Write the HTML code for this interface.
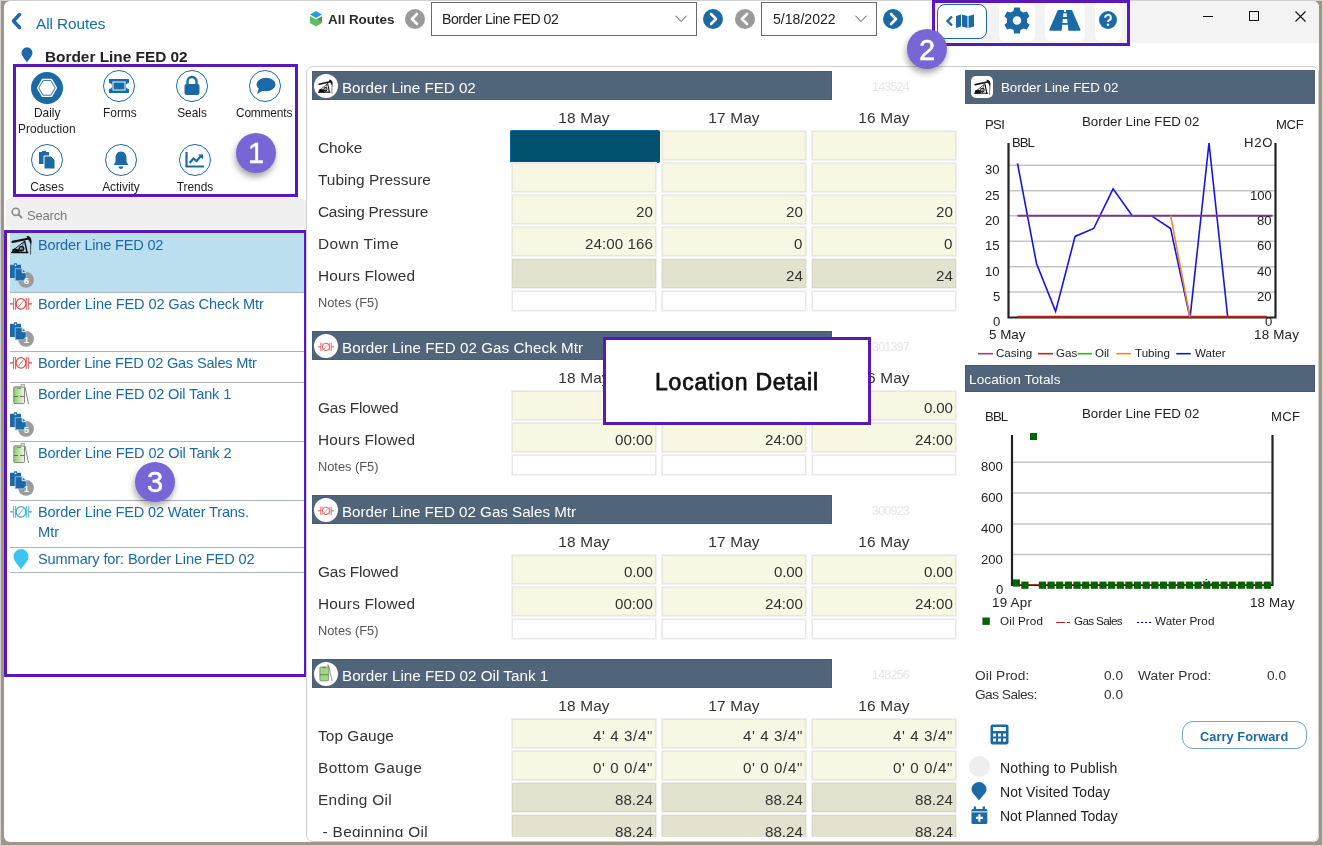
<!DOCTYPE html><html><head><meta charset="utf-8"><style>
html,body{margin:0;padding:0;}
body{width:1323px;height:846px;position:relative;overflow:hidden;background:#ced2d5;font-family:"Liberation Sans",sans-serif;}
.t{position:absolute;white-space:nowrap;line-height:1;will-change:transform;}
.b{position:absolute;box-sizing:border-box;}
svg{position:absolute;overflow:visible;}
</style></head><body>
<div class="b" style="left:1px;top:1px;width:1321px;height:844px;background:#a49482;"></div>
<div class="b" style="left:4px;top:1px;width:1315px;height:841px;background:#fff;border-radius:6px;"></div>
<div class="b" style="left:929px;top:1px;width:390px;height:42px;background:#f3f3f3;border-radius:0 6px 0 6px;"></div>
<div class="b" style="left:1203px;top:16px;width:10px;height:1px;background:#111;"></div>
<div class="b" style="left:1249px;top:11px;width:10px;height:10px;border:1px solid #111;"></div>
<svg style="left:1295px;top:11px" width="11" height="11"><path d="M0.5 0.5L10.5 10.5M10.5 0.5L0.5 10.5" stroke="#111" stroke-width="1.1"/></svg>
<svg style="left:10px;top:12px" width="14" height="18"><path d="M9.5 2.5L3.5 9L9.5 15.5" fill="none" stroke="#1b6aa7" stroke-width="3.5" stroke-linecap="round" stroke-linejoin="round"/></svg>
<div class="t " style="left:36px;top:16px;font-size:15.3px;color:#1b6aa7;font-weight:normal;letter-spacing:-0.041px;">All Routes</div>
<svg style="left:21px;top:47px" width="12" height="16"><path d="M6 15.5C4.5 13 0.5 9 0.5 5.8A5.5 5.5 0 0 1 11.5 5.8C11.5 9 7.5 13 6 15.5Z" fill="#1b6aa7"/></svg>
<div class="t " style="left:45px;top:49px;font-size:15.4px;color:#222;font-weight:bold;letter-spacing:-0.010px;">Border Line FED 02</div>
<div class="b" style="left:13px;top:64px;width:285px;height:133px;border:3px solid #5b17bf;"></div>
<div class="b" style="left:31px;top:72px;width:32px;height:32px;background:#1b6aa7;border-radius:50%;"></div>
<svg style="left:36px;top:78px" width="22" height="20" viewBox="0 0 22 20"><path d="M6 0.8H16L21.2 9.9L16 19H6L0.8 9.9Z" fill="#fff"/><path d="M7 2.6H15L19.1 9.9L15 17.2H7L2.9 9.9Z" fill="none" stroke="#1b6aa7" stroke-width="0.9"/></svg>
<div class="b" style="left:103px;top:70px;width:32px;height:32px;border:1.3px solid #1b6aa7;border-radius:50%;"></div>
<div class="b" style="left:176px;top:70px;width:32px;height:32px;border:1.3px solid #1b6aa7;border-radius:50%;"></div>
<div class="b" style="left:249px;top:70px;width:32px;height:32px;border:1.3px solid #1b6aa7;border-radius:50%;"></div>
<svg style="left:108px;top:78px" width="22" height="16"><path d="M1 1H21V5A3 3 0 0 0 21 11V15H1V11A3 3 0 0 0 1 5Z" fill="#1b6aa7"/><rect x="5" y="4" width="12" height="8" fill="none" stroke="#cfe3f2" stroke-width="1.2"/></svg>
<svg style="left:184px;top:76px" width="16" height="20"><path d="M3.5 8V5.5A4.5 4.5 0 0 1 12.5 5.5V8" fill="none" stroke="#1b6aa7" stroke-width="2.4"/><rect x="0.5" y="8" width="15" height="11" rx="2" fill="#1b6aa7"/></svg>
<svg style="left:255px;top:77px" width="21" height="18"><ellipse cx="11" cy="7.5" rx="9.5" ry="6.8" fill="#1b6aa7"/><path d="M4 11L2 17L9 13Z" fill="#1b6aa7"/></svg>
<div class="t " style="left:33.5px;top:108px;font-size:11.9px;color:#222;font-weight:normal;">Daily</div>
<div class="t " style="left:17.5px;top:124px;font-size:11.9px;color:#222;font-weight:normal;letter-spacing:0.085px;">Production</div>
<div class="t " style="left:103px;top:108px;font-size:11.9px;color:#222;font-weight:normal;">Forms</div>
<div class="t" style="left:-8.00px;width:400px;text-align:center;top:108px;font-size:11.9px;color:#222;font-weight:normal;">Seals</div>
<div class="t " style="left:236.3px;top:108px;font-size:11.9px;color:#222;font-weight:normal;letter-spacing:-0.163px;">Comments</div>
<div class="b" style="left:31px;top:144px;width:32px;height:32px;border:1.3px solid #1b6aa7;border-radius:50%;"></div>
<div class="b" style="left:105px;top:144px;width:32px;height:32px;border:1.3px solid #1b6aa7;border-radius:50%;"></div>
<div class="b" style="left:179px;top:144px;width:32px;height:32px;border:1.3px solid #1b6aa7;border-radius:50%;"></div>
<svg style="left:38px;top:150px" width="18" height="20"><path d="M1 2H4V1H8V2H11V14H1Z" fill="#1b6aa7"/><path d="M6 6H13L17 10V19H6Z" fill="#1b6aa7" stroke="#fff" stroke-width="1"/></svg>
<svg style="left:112px;top:150px" width="18" height="20"><path d="M9 1.5C5 1.5 3.5 5 3.5 8V12L1.5 15H16.5L14.5 12V8C14.5 5 13 1.5 9 1.5Z" fill="#1b6aa7"/><path d="M6.5 16.5A2.5 2.5 0 0 0 11.5 16.5Z" fill="#1b6aa7"/></svg>
<svg style="left:185px;top:151px" width="20" height="18"><path d="M1.5 1V15.5H19" fill="none" stroke="#1b6aa7" stroke-width="2.2"/><path d="M4.5 12L8.5 7.5L11.5 10L16.5 4.5" fill="none" stroke="#1b6aa7" stroke-width="2.2"/><path d="M13 3.5H18V8.5Z" fill="#1b6aa7"/></svg>
<div class="t" style="left:-153.00px;width:400px;text-align:center;top:182px;font-size:11.9px;color:#222;font-weight:normal;">Cases</div>
<div class="t" style="left:-79.00px;width:400px;text-align:center;top:182px;font-size:11.9px;color:#222;font-weight:normal;">Activity</div>
<div class="t" style="left:-5.00px;width:400px;text-align:center;top:182px;font-size:11.9px;color:#222;font-weight:normal;">Trends</div>
<div class="b" style="left:6px;top:198px;width:300px;height:31px;background:#f0f0f0;border-radius:5px;"></div>
<svg style="left:11px;top:207px" width="12" height="12"><circle cx="4.8" cy="4.8" r="3.6" fill="none" stroke="#8a8a8a" stroke-width="1.6"/><path d="M7.5 7.5L11 11" stroke="#8a8a8a" stroke-width="1.8"/></svg>
<div class="t " style="left:26.5px;top:209px;font-size:13px;color:#7a7a7a;font-weight:normal;letter-spacing:-0.192px;">Search</div>
<div class="b" style="left:10px;top:233px;width:294px;height:59px;background:#bcdff0;"></div>
<div class="b" style="left:10px;top:292px;width:294px;height:1px;background:#a9b5c4;"></div>
<div class="b" style="left:10px;top:351px;width:294px;height:1px;background:#a9b5c4;"></div>
<div class="b" style="left:10px;top:382px;width:294px;height:1px;background:#a9b5c4;"></div>
<div class="b" style="left:10px;top:441px;width:294px;height:1px;background:#a9b5c4;"></div>
<div class="b" style="left:10px;top:500px;width:294px;height:1px;background:#a9b5c4;"></div>
<div class="b" style="left:10px;top:547px;width:294px;height:1px;background:#a9b5c4;"></div>
<div class="b" style="left:10px;top:572px;width:294px;height:1px;background:#a9b5c4;"></div>
<svg style="left:10.5px;top:235px" width="21" height="19.5" viewBox="0 0 21 19.5" preserveAspectRatio="none"><g fill="none" stroke="#111" stroke-linecap="round"><path d="M1.5 6.9L16.8 3.7" stroke-width="2.1"/><path d="M19.6 10V19.2" stroke-width="0.7"/><path d="M0.8 17.6H16.8" stroke-width="1.5"/><path d="M3 14.5L12.5 7" stroke-width="0.9"/><circle cx="10.5" cy="13.6" r="2.2" stroke-width="1.5"/><path d="M13.6 6.2L16.1 17.6" stroke-width="1.5"/><path d="M12.5 7L10 17" stroke-width="0.7"/></g><path d="M15.3 0.9Q20.5 0.5 20.6 6.5L20.2 10.8Q19 6.5 15.3 0.9Z" fill="#111"/><path d="M0.8 18L1.6 14Q5 12.6 8.3 14.5L8.8 18Z" fill="#111"/></svg>
<div class="t " style="left:37.8px;top:238px;font-size:14.6px;color:#1b6aa7;font-weight:normal;letter-spacing:-0.210px;">Border Line FED 02</div>
<svg style="left:10px;top:263px" width="26" height="26" viewBox="0 0 26 26"><circle cx="16" cy="16.8" r="7.9" fill="#9b9b9b"/><path d="M0 1.8H4V0.2H7V1.8H11V15H0Z" fill="#1b6aa7"/><circle cx="5.5" cy="2.3" r="0.9" fill="#fff"/><path d="M5.2 5.7H12.2L16.2 9.7V17.8H5.2Z" fill="#1b6aa7" stroke="#a8cce6" stroke-width="0.8"/><path d="M12.2 5.9V9.7H16" fill="none" stroke="#fff" stroke-width="0.9"/><text x="16.3" y="20.6" font-family="Liberation Sans" font-weight="bold" font-size="9.5" fill="#fff" text-anchor="middle">6</text></svg>
<svg style="left:10px;top:297px" width="22" height="13.5" viewBox="0 0 22 13.5" preserveAspectRatio="none"><g fill="none" stroke="#e04848"><path d="M0 6.9H3.5M18.5 6.9H22" stroke-width="1.3"/><path d="M3.6 1V12.8M5.6 1V12.8M16.3 1V12.8M18.4 1V12.8" stroke-width="0.9"/><ellipse cx="11" cy="6.9" rx="4.9" ry="5.3" stroke-width="1.2"/><path d="M8 10.5L14 3.2" stroke-width="0.8"/></g></svg>
<div class="t " style="left:37.8px;top:297px;font-size:14.6px;color:#1b6aa7;font-weight:normal;letter-spacing:-0.145px;">Border Line FED 02 Gas Check Mtr</div>
<svg style="left:10px;top:322px" width="26" height="26" viewBox="0 0 26 26"><circle cx="16" cy="16.8" r="7.9" fill="#9b9b9b"/><path d="M0 1.8H4V0.2H7V1.8H11V15H0Z" fill="#1b6aa7"/><circle cx="5.5" cy="2.3" r="0.9" fill="#fff"/><path d="M5.2 5.7H12.2L16.2 9.7V17.8H5.2Z" fill="#1b6aa7" stroke="#a8cce6" stroke-width="0.8"/><path d="M12.2 5.9V9.7H16" fill="none" stroke="#fff" stroke-width="0.9"/><text x="16.3" y="20.6" font-family="Liberation Sans" font-weight="bold" font-size="9.5" fill="#fff" text-anchor="middle">1</text></svg>
<svg style="left:10px;top:356px" width="22" height="13.5" viewBox="0 0 22 13.5" preserveAspectRatio="none"><g fill="none" stroke="#e04848"><path d="M0 6.9H3.5M18.5 6.9H22" stroke-width="1.3"/><path d="M3.6 1V12.8M5.6 1V12.8M16.3 1V12.8M18.4 1V12.8" stroke-width="0.9"/><ellipse cx="11" cy="6.9" rx="4.9" ry="5.3" stroke-width="1.2"/><path d="M8 10.5L14 3.2" stroke-width="0.8"/></g></svg>
<div class="t " style="left:37.8px;top:356px;font-size:14.6px;color:#1b6aa7;font-weight:normal;letter-spacing:-0.214px;">Border Line FED 02 Gas Sales Mtr</div>
<svg style="left:12px;top:384px" width="16" height="20" viewBox="0 0 16 20" preserveAspectRatio="none"><defs><linearGradient id="tg" x1="0" x2="1"><stop offset="0" stop-color="#8ccd6a"/><stop offset="1" stop-color="#eef7e8"/></linearGradient></defs><rect x="1.8" y="2.8" width="10.7" height="16.8" rx="1.2" fill="url(#tg)" stroke="#7a7a7a" stroke-width="0.9"/><path d="M1.8 12.5H6M8 12.5H12.5" stroke="#555" stroke-width="0.8"/><rect x="9" y="0.4" width="3.5" height="2.6" fill="#ddd" stroke="#888" stroke-width="0.6"/><path d="M13 3L16.5 20" stroke="#777" stroke-width="0.9"/><path d="M5 4.3H9" stroke="#666" stroke-width="0.8"/></svg>
<div class="t " style="left:37.8px;top:387px;font-size:14.6px;color:#1b6aa7;font-weight:normal;letter-spacing:-0.157px;">Border Line FED 02 Oil Tank 1</div>
<svg style="left:10px;top:412px" width="26" height="26" viewBox="0 0 26 26"><circle cx="16" cy="16.8" r="7.9" fill="#9b9b9b"/><path d="M0 1.8H4V0.2H7V1.8H11V15H0Z" fill="#1b6aa7"/><circle cx="5.5" cy="2.3" r="0.9" fill="#fff"/><path d="M5.2 5.7H12.2L16.2 9.7V17.8H5.2Z" fill="#1b6aa7" stroke="#a8cce6" stroke-width="0.8"/><path d="M12.2 5.9V9.7H16" fill="none" stroke="#fff" stroke-width="0.9"/><text x="16.3" y="20.6" font-family="Liberation Sans" font-weight="bold" font-size="9.5" fill="#fff" text-anchor="middle">5</text></svg>
<svg style="left:12px;top:443px" width="16" height="20" viewBox="0 0 16 20" preserveAspectRatio="none"><defs><linearGradient id="tg" x1="0" x2="1"><stop offset="0" stop-color="#8ccd6a"/><stop offset="1" stop-color="#eef7e8"/></linearGradient></defs><rect x="1.8" y="2.8" width="10.7" height="16.8" rx="1.2" fill="url(#tg)" stroke="#7a7a7a" stroke-width="0.9"/><path d="M1.8 12.5H6M8 12.5H12.5" stroke="#555" stroke-width="0.8"/><rect x="9" y="0.4" width="3.5" height="2.6" fill="#ddd" stroke="#888" stroke-width="0.6"/><path d="M13 3L16.5 20" stroke="#777" stroke-width="0.9"/><path d="M5 4.3H9" stroke="#666" stroke-width="0.8"/></svg>
<div class="t " style="left:37.8px;top:446px;font-size:14.6px;color:#1b6aa7;font-weight:normal;letter-spacing:-0.147px;">Border Line FED 02 Oil Tank 2</div>
<svg style="left:10px;top:471px" width="26" height="26" viewBox="0 0 26 26"><circle cx="16" cy="16.8" r="7.9" fill="#9b9b9b"/><path d="M0 1.8H4V0.2H7V1.8H11V15H0Z" fill="#1b6aa7"/><circle cx="5.5" cy="2.3" r="0.9" fill="#fff"/><path d="M5.2 5.7H12.2L16.2 9.7V17.8H5.2Z" fill="#1b6aa7" stroke="#a8cce6" stroke-width="0.8"/><path d="M12.2 5.9V9.7H16" fill="none" stroke="#fff" stroke-width="0.9"/><text x="16.3" y="20.6" font-family="Liberation Sans" font-weight="bold" font-size="9.5" fill="#fff" text-anchor="middle">1</text></svg>
<svg style="left:10px;top:505px" width="22" height="13.5" viewBox="0 0 22 13.5" preserveAspectRatio="none"><g fill="none" stroke="#3aa6d8"><path d="M0 6.9H3.5M18.5 6.9H22" stroke-width="1.3"/><path d="M3.6 1V12.8M5.6 1V12.8M16.3 1V12.8M18.4 1V12.8" stroke-width="0.9"/><ellipse cx="11" cy="6.9" rx="4.9" ry="5.3" stroke-width="1.2"/><path d="M8 10.5L14 3.2" stroke-width="0.8"/></g></svg>
<div class="t " style="left:37.8px;top:505px;font-size:14.6px;color:#1b6aa7;font-weight:normal;letter-spacing:-0.168px;">Border Line FED 02 Water Trans.</div>
<div class="t " style="left:37.8px;top:525px;font-size:14.6px;color:#1b6aa7;font-weight:normal;">Mtr</div>
<svg style="left:13px;top:549px" width="16" height="21"><path d="M8 20.5C6 17 0.5 12 0.5 7.5A7.5 7.5 0 0 1 15.5 7.5C15.5 12 10 17 8 20.5Z" fill="#3cc4f0"/></svg>
<div class="t " style="left:37.8px;top:552px;font-size:14.6px;color:#1b6aa7;font-weight:normal;letter-spacing:-0.133px;">Summary for: Border Line FED 02</div>
<div class="b" style="left:4px;top:230px;width:303px;height:447px;border:3px solid #5b17bf;"></div>
<svg style="left:309px;top:11px" width="14" height="16" viewBox="0 0 14 16"><path d="M7 0L13 3.5L7 7L1 3.5Z" fill="#1ea0e0"/><path d="M1 5L7 8.5V15.5L1 12Z" fill="#5cc060"/><path d="M7 8.5L13 5V12L7 15.5Z" fill="#5cc060"/><path d="M13 5.5V11L8.5 8.2Z" fill="#777"/></svg>
<div class="t " style="left:327.5px;top:13px;font-size:13.4px;color:#2b2b2b;font-weight:bold;letter-spacing:0.015px;">All Routes</div>
<div class="b" style="left:405px;top:8.5px;width:20px;height:20px;background:#9a9a9a;border-radius:50%;"></div>
<svg style="left:405px;top:8.5px" width="20" height="20"><path d="M12 5L7 10L12 15" fill="none" stroke="#fff" stroke-width="2.6" stroke-linecap="round" stroke-linejoin="round"/></svg>
<div class="b" style="left:431px;top:2px;width:266px;height:34px;border:1px solid #6a6a6a;background:#fff;"></div>
<div class="t " style="left:442.3px;top:12px;font-size:14.1px;color:#222;font-weight:normal;letter-spacing:-0.454px;">Border Line FED 02</div>
<svg style="left:675px;top:15px" width="12" height="8"><path d="M0.5 0.8L6 6.5L11.5 0.8" fill="none" stroke="#555" stroke-width="1"/></svg>
<div class="b" style="left:703px;top:8.5px;width:20px;height:20px;background:#1b6aa7;border-radius:50%;"></div>
<svg style="left:703px;top:8.5px" width="20" height="20"><path d="M8 5L13 10L8 15" fill="none" stroke="#fff" stroke-width="2.6" stroke-linecap="round" stroke-linejoin="round"/></svg>
<div class="b" style="left:735px;top:8.5px;width:20px;height:20px;background:#9a9a9a;border-radius:50%;"></div>
<svg style="left:735px;top:8.5px" width="20" height="20"><path d="M12 5L7 10L12 15" fill="none" stroke="#fff" stroke-width="2.6" stroke-linecap="round" stroke-linejoin="round"/></svg>
<div class="b" style="left:761px;top:2px;width:116px;height:34px;border:1px solid #6a6a6a;background:#fff;"></div>
<div class="t " style="left:772.6px;top:12px;font-size:14.1px;color:#222;font-weight:normal;letter-spacing:-0.008px;">5/18/2022</div>
<svg style="left:855px;top:15px" width="12" height="8"><path d="M0.5 0.8L6 6.5L11.5 0.8" fill="none" stroke="#555" stroke-width="1"/></svg>
<div class="b" style="left:883px;top:8.5px;width:20px;height:20px;background:#1b6aa7;border-radius:50%;"></div>
<svg style="left:883px;top:8.5px" width="20" height="20"><path d="M8 5L13 10L8 15" fill="none" stroke="#fff" stroke-width="2.6" stroke-linecap="round" stroke-linejoin="round"/></svg>
<div class="b" style="left:999px;top:3px;width:36px;height:38px;background:#fff;border-radius:5px;"></div>
<div class="b" style="left:1045px;top:3px;width:40px;height:38px;background:#fff;border-radius:5px;"></div>
<div class="b" style="left:1095px;top:3px;width:26px;height:38px;background:#fff;border-radius:5px;"></div>
<div class="b" style="left:937px;top:4px;width:50px;height:35px;border:1px solid #1b6aa7;border-radius:8px;background:#fff;"></div>
<svg style="left:945px;top:14px" width="36" height="15" viewBox="0 0 36 15"><path d="M7 2.5L2.5 7L7 11.5" fill="none" stroke="#1b6aa7" stroke-width="2.3"/><path d="M11 2L16 0.5V12.5L11 14Z M17 0.5L22.5 2V14L17 12.5Z M23.5 2L29 0.5V12.5L23.5 14Z" fill="#1b6aa7"/></svg>
<svg style="left:1004px;top:7px" width="26" height="27" viewBox="0 0 26 27"><g transform="translate(13,13.5)"><path d="M-2.8 -13H2.8L3.5 -9.6L6.5 -7.9L9.8 -9.1L12.6 -4.3L10 -2V2L12.6 4.3L9.8 9.1L6.5 7.9L3.5 9.6L2.8 13H-2.8L-3.5 9.6L-6.5 7.9L-9.8 9.1L-12.6 4.3L-10 2V-2L-12.6 -4.3L-9.8 -9.1L-6.5 -7.9L-3.5 -9.6Z" fill="#1b6aa7"/><circle r="4.2" fill="#fff"/></g></svg>
<svg style="left:1040px;top:4px" width="50" height="34" viewBox="1040 4 50 34"><path d="M1057.8 10H1072L1080.3 29.2Q1080.8 30.7 1079.3 30.7H1050.5Q1049 30.7 1049.5 29.2Z" fill="#1b6aa7"/><g fill="#fff"><path d="M1064 9.5H1066V12H1064Z"/><path d="M1063.4 13.2H1066.6L1066.9 17H1063.1Z"/><path d="M1062.8 18.9H1067.2L1067.5 23H1062.5Z"/><path d="M1062.2 24.8H1067.8L1068.4 31H1061.6Z"/></g></svg>
<svg style="left:1099px;top:11px" width="18" height="18" viewBox="0 0 18 18"><circle cx="9" cy="9" r="9" fill="#1b6aa7"/><path d="M6.2 6.8A2.8 2.8 0 1 1 10 9.3C9.2 9.7 9 10 9 11" fill="none" stroke="#fff" stroke-width="2"/><circle cx="9" cy="13.8" r="1.2" fill="#fff"/></svg>
<div class="b" style="left:932px;top:0px;width:198px;height:46px;border:3px solid #5b17bf;"></div>
<div class="b" style="left:306px;top:66px;width:1013px;height:776px;border:1px solid #cfcfcf;border-radius:7px;"></div>
<div class="b" style="left:312px;top:71px;width:520px;height:29px;background:#50647a;border:1px solid #4b5e73;"></div>
<div class="b" style="left:314px;top:74px;width:24px;height:24px;background:#fff;border-radius:50%;"></div>
<svg style="left:318.4px;top:78.6px" width="14.9" height="14.6" viewBox="0 0 21 19.5" preserveAspectRatio="none"><g fill="none" stroke="#111" stroke-linecap="round"><path d="M1.5 6.9L16.8 3.7" stroke-width="2.1"/><path d="M19.6 10V19.2" stroke-width="0.7"/><path d="M0.8 17.6H16.8" stroke-width="1.5"/><path d="M3 14.5L12.5 7" stroke-width="0.9"/><circle cx="10.5" cy="13.6" r="2.2" stroke-width="1.5"/><path d="M13.6 6.2L16.1 17.6" stroke-width="1.5"/><path d="M12.5 7L10 17" stroke-width="0.7"/></g><path d="M15.3 0.9Q20.5 0.5 20.6 6.5L20.2 10.8Q19 6.5 15.3 0.9Z" fill="#111"/><path d="M0.8 18L1.6 14Q5 12.6 8.3 14.5L8.8 18Z" fill="#111"/></svg>
<div class="t " style="left:341.8px;top:80px;font-size:15.2px;color:#fff;font-weight:normal;letter-spacing:-0.028px;">Border Line FED 02</div>
<div class="t " style="left:872.3px;top:81px;font-size:12.5px;color:#e6e6e6;font-weight:normal;letter-spacing:-0.792px;">143524</div>
<div class="t" style="left:384.08px;width:400px;text-align:center;top:110px;font-size:15.4px;color:#333;font-weight:normal;letter-spacing:0.165px;">18 May</div>
<div class="t" style="left:534.08px;width:400px;text-align:center;top:110px;font-size:15.4px;color:#333;font-weight:normal;letter-spacing:0.165px;">17 May</div>
<div class="t" style="left:684.08px;width:400px;text-align:center;top:110px;font-size:15.4px;color:#333;font-weight:normal;letter-spacing:0.165px;">16 May</div>
<div class="t " style="left:317.5px;top:140px;font-size:15.4px;color:#333;font-weight:normal;letter-spacing:-0.057px;">Choke</div>
<div class="b" style="left:510px;top:130px;width:150px;height:33px;background:#00506e;border-radius:2px;border-top:1px solid #0a64a0;border-left:1px solid #0a64a0;"></div>
<div class="b" style="left:662px;top:131px;width:144px;height:29px;background:#f8f7e4;border:1px solid #e6e6da;box-shadow:0 0 0 1px #f1f1f1;"></div>
<div class="b" style="left:812px;top:131px;width:144px;height:29px;background:#f8f7e4;border:1px solid #e6e6da;box-shadow:0 0 0 1px #f1f1f1;"></div>
<div class="t " style="left:317.5px;top:172px;font-size:15.4px;color:#333;font-weight:normal;letter-spacing:0.037px;">Tubing Pressure</div>
<div class="b" style="left:512px;top:163px;width:144px;height:29px;background:#f8f7e4;border:1px solid #e6e6da;box-shadow:0 0 0 1px #f1f1f1;"></div>
<div class="b" style="left:662px;top:163px;width:144px;height:29px;background:#f8f7e4;border:1px solid #e6e6da;box-shadow:0 0 0 1px #f1f1f1;"></div>
<div class="b" style="left:812px;top:163px;width:144px;height:29px;background:#f8f7e4;border:1px solid #e6e6da;box-shadow:0 0 0 1px #f1f1f1;"></div>
<div class="t " style="left:317.5px;top:204px;font-size:15.4px;color:#333;font-weight:normal;letter-spacing:-0.244px;">Casing Pressure</div>
<div class="b" style="left:512px;top:195px;width:144px;height:29px;background:#f8f7e4;border:1px solid #e6e6da;box-shadow:0 0 0 1px #f1f1f1;"></div>
<div class="t" style="right:670.50px;top:204px;font-size:15.15px;color:#333;font-weight:normal;">20</div>
<div class="b" style="left:662px;top:195px;width:144px;height:29px;background:#f8f7e4;border:1px solid #e6e6da;box-shadow:0 0 0 1px #f1f1f1;"></div>
<div class="t" style="right:520.50px;top:204px;font-size:15.15px;color:#333;font-weight:normal;">20</div>
<div class="b" style="left:812px;top:195px;width:144px;height:29px;background:#f8f7e4;border:1px solid #e6e6da;box-shadow:0 0 0 1px #f1f1f1;"></div>
<div class="t" style="right:370.50px;top:204px;font-size:15.15px;color:#333;font-weight:normal;">20</div>
<div class="t " style="left:317.5px;top:236px;font-size:15.4px;color:#333;font-weight:normal;letter-spacing:0.451px;">Down Time</div>
<div class="b" style="left:512px;top:227px;width:144px;height:29px;background:#f8f7e4;border:1px solid #e6e6da;box-shadow:0 0 0 1px #f1f1f1;"></div>
<div class="t" style="right:670.44px;top:236px;font-size:15.15px;color:#333;font-weight:normal;letter-spacing:0.058px;">24:00 166</div>
<div class="b" style="left:662px;top:227px;width:144px;height:29px;background:#f8f7e4;border:1px solid #e6e6da;box-shadow:0 0 0 1px #f1f1f1;"></div>
<div class="t" style="right:520.50px;top:236px;font-size:15.15px;color:#333;font-weight:normal;">0</div>
<div class="b" style="left:812px;top:227px;width:144px;height:29px;background:#f8f7e4;border:1px solid #e6e6da;box-shadow:0 0 0 1px #f1f1f1;"></div>
<div class="t" style="right:370.50px;top:236px;font-size:15.15px;color:#333;font-weight:normal;">0</div>
<div class="t " style="left:317.5px;top:268px;font-size:15.4px;color:#333;font-weight:normal;letter-spacing:0.192px;">Hours Flowed</div>
<div class="b" style="left:512px;top:259px;width:144px;height:29px;background:#e3e2cf;border:1px solid #d9d8c6;box-shadow:0 0 0 1px #f1f1f1;"></div>
<div class="b" style="left:662px;top:259px;width:144px;height:29px;background:#e3e2cf;border:1px solid #d9d8c6;box-shadow:0 0 0 1px #f1f1f1;"></div>
<div class="t" style="right:520.50px;top:268px;font-size:15.15px;color:#333;font-weight:normal;">24</div>
<div class="b" style="left:812px;top:259px;width:144px;height:29px;background:#e3e2cf;border:1px solid #d9d8c6;box-shadow:0 0 0 1px #f1f1f1;"></div>
<div class="t" style="right:370.50px;top:268px;font-size:15.15px;color:#333;font-weight:normal;">24</div>
<div class="t " style="left:317.8px;top:297px;font-size:12.8px;color:#555;font-weight:normal;">Notes (F5)</div>
<div class="b" style="left:512px;top:291px;width:144px;height:20px;background:#fff;border:1px solid #e8e8e8;box-shadow:0 0 0 1px #f4f4f4;"></div>
<div class="b" style="left:662px;top:291px;width:144px;height:20px;background:#fff;border:1px solid #e8e8e8;box-shadow:0 0 0 1px #f4f4f4;"></div>
<div class="b" style="left:812px;top:291px;width:144px;height:20px;background:#fff;border:1px solid #e8e8e8;box-shadow:0 0 0 1px #f4f4f4;"></div>
<div class="b" style="left:312px;top:331px;width:520px;height:29px;background:#50647a;border:1px solid #4b5e73;"></div>
<div class="b" style="left:314px;top:334px;width:24px;height:24px;background:#fff;border-radius:50%;"></div>
<svg style="left:318px;top:341.5px" width="16" height="9.5" viewBox="0 0 22 13.5" preserveAspectRatio="none"><g fill="none" stroke="#e04848"><path d="M0 6.9H3.5M18.5 6.9H22" stroke-width="1.3"/><path d="M3.6 1V12.8M5.6 1V12.8M16.3 1V12.8M18.4 1V12.8" stroke-width="0.9"/><ellipse cx="11" cy="6.9" rx="4.9" ry="5.3" stroke-width="1.2"/><path d="M8 10.5L14 3.2" stroke-width="0.8"/></g></svg>
<div class="t " style="left:341.8px;top:340px;font-size:15.2px;color:#fff;font-weight:normal;letter-spacing:0.043px;">Border Line FED 02 Gas Check Mtr</div>
<div class="t " style="left:872.3px;top:341px;font-size:12.5px;color:#e6e6e6;font-weight:normal;letter-spacing:-0.792px;">301397</div>
<div class="t" style="left:384.08px;width:400px;text-align:center;top:370px;font-size:15.4px;color:#333;font-weight:normal;letter-spacing:0.165px;">18 May</div>
<div class="t" style="left:534.08px;width:400px;text-align:center;top:370px;font-size:15.4px;color:#333;font-weight:normal;letter-spacing:0.165px;">17 May</div>
<div class="t" style="left:684.08px;width:400px;text-align:center;top:370px;font-size:15.4px;color:#333;font-weight:normal;letter-spacing:0.165px;">16 May</div>
<div class="t " style="left:317.5px;top:400px;font-size:15.4px;color:#333;font-weight:normal;letter-spacing:-0.173px;">Gas Flowed</div>
<div class="b" style="left:512px;top:391px;width:144px;height:29px;background:#f8f7e4;border:1px solid #e6e6da;box-shadow:0 0 0 1px #f1f1f1;"></div>
<div class="t" style="right:670.72px;top:400px;font-size:15.15px;color:#333;font-weight:normal;letter-spacing:-0.216px;">0.00</div>
<div class="b" style="left:662px;top:391px;width:144px;height:29px;background:#f8f7e4;border:1px solid #e6e6da;box-shadow:0 0 0 1px #f1f1f1;"></div>
<div class="t" style="right:520.72px;top:400px;font-size:15.15px;color:#333;font-weight:normal;letter-spacing:-0.216px;">0.00</div>
<div class="b" style="left:812px;top:391px;width:144px;height:29px;background:#f8f7e4;border:1px solid #e6e6da;box-shadow:0 0 0 1px #f1f1f1;"></div>
<div class="t" style="right:370.72px;top:400px;font-size:15.15px;color:#333;font-weight:normal;letter-spacing:-0.216px;">0.00</div>
<div class="t " style="left:317.5px;top:432px;font-size:15.4px;color:#333;font-weight:normal;letter-spacing:0.192px;">Hours Flowed</div>
<div class="b" style="left:512px;top:423px;width:144px;height:29px;background:#f8f7e4;border:1px solid #e6e6da;box-shadow:0 0 0 1px #f1f1f1;"></div>
<div class="t" style="right:670.52px;top:432px;font-size:15.15px;color:#333;font-weight:normal;letter-spacing:-0.017px;">00:00</div>
<div class="b" style="left:662px;top:423px;width:144px;height:29px;background:#f8f7e4;border:1px solid #e6e6da;box-shadow:0 0 0 1px #f1f1f1;"></div>
<div class="t" style="right:520.52px;top:432px;font-size:15.15px;color:#333;font-weight:normal;letter-spacing:-0.017px;">24:00</div>
<div class="b" style="left:812px;top:423px;width:144px;height:29px;background:#f8f7e4;border:1px solid #e6e6da;box-shadow:0 0 0 1px #f1f1f1;"></div>
<div class="t" style="right:370.52px;top:432px;font-size:15.15px;color:#333;font-weight:normal;letter-spacing:-0.017px;">24:00</div>
<div class="t " style="left:317.8px;top:461px;font-size:12.8px;color:#555;font-weight:normal;">Notes (F5)</div>
<div class="b" style="left:512px;top:455px;width:144px;height:20px;background:#fff;border:1px solid #e8e8e8;box-shadow:0 0 0 1px #f4f4f4;"></div>
<div class="b" style="left:662px;top:455px;width:144px;height:20px;background:#fff;border:1px solid #e8e8e8;box-shadow:0 0 0 1px #f4f4f4;"></div>
<div class="b" style="left:812px;top:455px;width:144px;height:20px;background:#fff;border:1px solid #e8e8e8;box-shadow:0 0 0 1px #f4f4f4;"></div>
<div class="b" style="left:312px;top:495px;width:520px;height:29px;background:#50647a;border:1px solid #4b5e73;"></div>
<div class="b" style="left:314px;top:498px;width:24px;height:24px;background:#fff;border-radius:50%;"></div>
<svg style="left:318px;top:505.5px" width="16" height="9.5" viewBox="0 0 22 13.5" preserveAspectRatio="none"><g fill="none" stroke="#e04848"><path d="M0 6.9H3.5M18.5 6.9H22" stroke-width="1.3"/><path d="M3.6 1V12.8M5.6 1V12.8M16.3 1V12.8M18.4 1V12.8" stroke-width="0.9"/><ellipse cx="11" cy="6.9" rx="4.9" ry="5.3" stroke-width="1.2"/><path d="M8 10.5L14 3.2" stroke-width="0.8"/></g></svg>
<div class="t " style="left:341.8px;top:504px;font-size:15.2px;color:#fff;font-weight:normal;letter-spacing:-0.019px;">Border Line FED 02 Gas Sales Mtr</div>
<div class="t " style="left:872.3px;top:505px;font-size:12.5px;color:#e6e6e6;font-weight:normal;letter-spacing:-0.792px;">300923</div>
<div class="t" style="left:384.08px;width:400px;text-align:center;top:534px;font-size:15.4px;color:#333;font-weight:normal;letter-spacing:0.165px;">18 May</div>
<div class="t" style="left:534.08px;width:400px;text-align:center;top:534px;font-size:15.4px;color:#333;font-weight:normal;letter-spacing:0.165px;">17 May</div>
<div class="t" style="left:684.08px;width:400px;text-align:center;top:534px;font-size:15.4px;color:#333;font-weight:normal;letter-spacing:0.165px;">16 May</div>
<div class="t " style="left:317.5px;top:564px;font-size:15.4px;color:#333;font-weight:normal;letter-spacing:-0.173px;">Gas Flowed</div>
<div class="b" style="left:512px;top:555px;width:144px;height:29px;background:#f8f7e4;border:1px solid #e6e6da;box-shadow:0 0 0 1px #f1f1f1;"></div>
<div class="t" style="right:670.72px;top:564px;font-size:15.15px;color:#333;font-weight:normal;letter-spacing:-0.216px;">0.00</div>
<div class="b" style="left:662px;top:555px;width:144px;height:29px;background:#f8f7e4;border:1px solid #e6e6da;box-shadow:0 0 0 1px #f1f1f1;"></div>
<div class="t" style="right:520.72px;top:564px;font-size:15.15px;color:#333;font-weight:normal;letter-spacing:-0.216px;">0.00</div>
<div class="b" style="left:812px;top:555px;width:144px;height:29px;background:#f8f7e4;border:1px solid #e6e6da;box-shadow:0 0 0 1px #f1f1f1;"></div>
<div class="t" style="right:370.72px;top:564px;font-size:15.15px;color:#333;font-weight:normal;letter-spacing:-0.216px;">0.00</div>
<div class="t " style="left:317.5px;top:596px;font-size:15.4px;color:#333;font-weight:normal;letter-spacing:0.192px;">Hours Flowed</div>
<div class="b" style="left:512px;top:587px;width:144px;height:29px;background:#f8f7e4;border:1px solid #e6e6da;box-shadow:0 0 0 1px #f1f1f1;"></div>
<div class="t" style="right:670.52px;top:596px;font-size:15.15px;color:#333;font-weight:normal;letter-spacing:-0.017px;">00:00</div>
<div class="b" style="left:662px;top:587px;width:144px;height:29px;background:#f8f7e4;border:1px solid #e6e6da;box-shadow:0 0 0 1px #f1f1f1;"></div>
<div class="t" style="right:520.52px;top:596px;font-size:15.15px;color:#333;font-weight:normal;letter-spacing:-0.017px;">24:00</div>
<div class="b" style="left:812px;top:587px;width:144px;height:29px;background:#f8f7e4;border:1px solid #e6e6da;box-shadow:0 0 0 1px #f1f1f1;"></div>
<div class="t" style="right:370.52px;top:596px;font-size:15.15px;color:#333;font-weight:normal;letter-spacing:-0.017px;">24:00</div>
<div class="t " style="left:317.8px;top:625px;font-size:12.8px;color:#555;font-weight:normal;">Notes (F5)</div>
<div class="b" style="left:512px;top:619px;width:144px;height:20px;background:#fff;border:1px solid #e8e8e8;box-shadow:0 0 0 1px #f4f4f4;"></div>
<div class="b" style="left:662px;top:619px;width:144px;height:20px;background:#fff;border:1px solid #e8e8e8;box-shadow:0 0 0 1px #f4f4f4;"></div>
<div class="b" style="left:812px;top:619px;width:144px;height:20px;background:#fff;border:1px solid #e8e8e8;box-shadow:0 0 0 1px #f4f4f4;"></div>
<div style="position:absolute;left:0;top:0;width:1323px;height:837px;overflow:hidden;">
<div class="b" style="left:312px;top:659px;width:520px;height:29px;background:#50647a;border:1px solid #4b5e73;"></div>
<div class="b" style="left:314px;top:662px;width:24px;height:24px;background:#fff;border-radius:50%;"></div>
<svg style="left:319px;top:664px" width="14" height="18" viewBox="0 0 16 20"><rect x="1" y="3" width="10" height="16" rx="1" fill="#a0d880" stroke="#777" stroke-width="0.8"/><path d="M1 12H11M4 4H8" stroke="#555" stroke-width="0.8"/><path d="M9 1H11V3M11 2L15 19" stroke="#777" stroke-width="0.9" fill="none"/></svg>
<div class="t " style="left:341.8px;top:668px;font-size:15.2px;color:#fff;font-weight:normal;letter-spacing:0.017px;">Border Line FED 02 Oil Tank 1</div>
<div class="t " style="left:872.3px;top:669px;font-size:12.5px;color:#e6e6e6;font-weight:normal;letter-spacing:-0.792px;">148256</div>
<div class="t" style="left:384.08px;width:400px;text-align:center;top:698px;font-size:15.4px;color:#333;font-weight:normal;letter-spacing:0.165px;">18 May</div>
<div class="t" style="left:534.08px;width:400px;text-align:center;top:698px;font-size:15.4px;color:#333;font-weight:normal;letter-spacing:0.165px;">17 May</div>
<div class="t" style="left:684.08px;width:400px;text-align:center;top:698px;font-size:15.4px;color:#333;font-weight:normal;letter-spacing:0.165px;">16 May</div>
<div class="t " style="left:317.5px;top:728px;font-size:15.4px;color:#333;font-weight:normal;letter-spacing:0.070px;">Top Gauge</div>
<div class="b" style="left:512px;top:719px;width:144px;height:29px;background:#f8f7e4;border:1px solid #e6e6da;box-shadow:0 0 0 1px #f1f1f1;"></div>
<div class="t" style="right:669.91px;top:728px;font-size:15.15px;color:#333;font-weight:normal;letter-spacing:0.588px;">4' 4 3/4&quot;</div>
<div class="b" style="left:662px;top:719px;width:144px;height:29px;background:#f8f7e4;border:1px solid #e6e6da;box-shadow:0 0 0 1px #f1f1f1;"></div>
<div class="t" style="right:519.91px;top:728px;font-size:15.15px;color:#333;font-weight:normal;letter-spacing:0.588px;">4' 4 3/4&quot;</div>
<div class="b" style="left:812px;top:719px;width:144px;height:29px;background:#f8f7e4;border:1px solid #e6e6da;box-shadow:0 0 0 1px #f1f1f1;"></div>
<div class="t" style="right:369.91px;top:728px;font-size:15.15px;color:#333;font-weight:normal;letter-spacing:0.588px;">4' 4 3/4&quot;</div>
<div class="t " style="left:317.5px;top:760px;font-size:15.4px;color:#333;font-weight:normal;letter-spacing:0.411px;">Bottom Gauge</div>
<div class="b" style="left:512px;top:751px;width:144px;height:29px;background:#f8f7e4;border:1px solid #e6e6da;box-shadow:0 0 0 1px #f1f1f1;"></div>
<div class="t" style="right:669.91px;top:760px;font-size:15.15px;color:#333;font-weight:normal;letter-spacing:0.588px;">0' 0 0/4&quot;</div>
<div class="b" style="left:662px;top:751px;width:144px;height:29px;background:#f8f7e4;border:1px solid #e6e6da;box-shadow:0 0 0 1px #f1f1f1;"></div>
<div class="t" style="right:519.91px;top:760px;font-size:15.15px;color:#333;font-weight:normal;letter-spacing:0.588px;">0' 0 0/4&quot;</div>
<div class="b" style="left:812px;top:751px;width:144px;height:29px;background:#f8f7e4;border:1px solid #e6e6da;box-shadow:0 0 0 1px #f1f1f1;"></div>
<div class="t" style="right:369.91px;top:760px;font-size:15.15px;color:#333;font-weight:normal;letter-spacing:0.588px;">0' 0 0/4&quot;</div>
<div class="t " style="left:317.5px;top:792px;font-size:15.4px;color:#333;font-weight:normal;letter-spacing:0.301px;">Ending Oil</div>
<div class="b" style="left:512px;top:783px;width:144px;height:29px;background:#e3e2cf;border:1px solid #d9d8c6;box-shadow:0 0 0 1px #f1f1f1;"></div>
<div class="t" style="right:670.52px;top:792px;font-size:15.15px;color:#333;font-weight:normal;letter-spacing:-0.017px;">88.24</div>
<div class="b" style="left:662px;top:783px;width:144px;height:29px;background:#e3e2cf;border:1px solid #d9d8c6;box-shadow:0 0 0 1px #f1f1f1;"></div>
<div class="t" style="right:520.52px;top:792px;font-size:15.15px;color:#333;font-weight:normal;letter-spacing:-0.017px;">88.24</div>
<div class="b" style="left:812px;top:783px;width:144px;height:29px;background:#e3e2cf;border:1px solid #d9d8c6;box-shadow:0 0 0 1px #f1f1f1;"></div>
<div class="t" style="right:370.52px;top:792px;font-size:15.15px;color:#333;font-weight:normal;letter-spacing:-0.017px;">88.24</div>
<div class="t " style="left:317.5px;top:824px;font-size:15.4px;color:#333;font-weight:normal;letter-spacing:0.298px;">&nbsp;- Beginning Oil</div>
<div class="b" style="left:512px;top:815px;width:144px;height:29px;background:#e3e2cf;border:1px solid #d9d8c6;box-shadow:0 0 0 1px #f1f1f1;"></div>
<div class="t" style="right:670.52px;top:824px;font-size:15.15px;color:#333;font-weight:normal;letter-spacing:-0.017px;">88.24</div>
<div class="b" style="left:662px;top:815px;width:144px;height:29px;background:#e3e2cf;border:1px solid #d9d8c6;box-shadow:0 0 0 1px #f1f1f1;"></div>
<div class="t" style="right:520.52px;top:824px;font-size:15.15px;color:#333;font-weight:normal;letter-spacing:-0.017px;">88.24</div>
<div class="b" style="left:812px;top:815px;width:144px;height:29px;background:#e3e2cf;border:1px solid #d9d8c6;box-shadow:0 0 0 1px #f1f1f1;"></div>
<div class="t" style="right:370.52px;top:824px;font-size:15.15px;color:#333;font-weight:normal;letter-spacing:-0.017px;">88.24</div>
</div>
<div class="b" style="left:965px;top:70px;width:350px;height:34px;background:#50647a;"></div>
<div class="b" style="left:971px;top:76px;width:22px;height:22px;background:#fff;border-radius:5px;"></div>
<svg style="left:973.6px;top:79.1px" width="16.8" height="15.8" viewBox="0 0 21 19.5" preserveAspectRatio="none"><g fill="none" stroke="#111" stroke-linecap="round"><path d="M1.5 6.9L16.8 3.7" stroke-width="2.1"/><path d="M19.6 10V19.2" stroke-width="0.7"/><path d="M0.8 17.6H16.8" stroke-width="1.5"/><path d="M3 14.5L12.5 7" stroke-width="0.9"/><circle cx="10.5" cy="13.6" r="2.2" stroke-width="1.5"/><path d="M13.6 6.2L16.1 17.6" stroke-width="1.5"/><path d="M12.5 7L10 17" stroke-width="0.7"/></g><path d="M15.3 0.9Q20.5 0.5 20.6 6.5L20.2 10.8Q19 6.5 15.3 0.9Z" fill="#111"/><path d="M0.8 18L1.6 14Q5 12.6 8.3 14.5L8.8 18Z" fill="#111"/></svg>
<div class="t " style="left:1000.8px;top:81px;font-size:13.4px;color:#fff;font-weight:normal;letter-spacing:-0.059px;">Border Line FED 02</div>
<div class="t " style="left:984.8px;top:118px;font-size:13.1px;color:#222;font-weight:normal;letter-spacing:-0.633px;">PSI</div>
<div class="t " style="left:1081.5px;top:115px;font-size:13.3px;color:#222;font-weight:normal;letter-spacing:-0.007px;">Border Line FED 02</div>
<div class="t " style="left:1276.2px;top:118px;font-size:13.1px;color:#222;font-weight:normal;letter-spacing:-0.332px;">MCF</div>
<div class="t " style="left:1012px;top:136px;font-size:13.1px;color:#222;font-weight:normal;letter-spacing:-0.983px;">BBL</div>
<div class="t " style="left:1244px;top:136px;font-size:13.1px;color:#222;font-weight:normal;letter-spacing:0.731px;">H2O</div>
<svg style="left:0;top:0" width="1323" height="846"><line x1="1009" y1="165.3" x2="1275" y2="165.3" stroke="#c6c6c6" stroke-width="1.5"/><line x1="1009" y1="190.7" x2="1275" y2="190.7" stroke="#c6c6c6" stroke-width="1.5"/><line x1="1009" y1="215.8" x2="1275" y2="215.8" stroke="#c6c6c6" stroke-width="1.5"/><line x1="1009" y1="241.2" x2="1275" y2="241.2" stroke="#c6c6c6" stroke-width="1.5"/><line x1="1009" y1="266.7" x2="1275" y2="266.7" stroke="#c6c6c6" stroke-width="1.5"/><line x1="1009" y1="291.9" x2="1275" y2="291.9" stroke="#c6c6c6" stroke-width="1.5"/><path d="M1008.5 143V317.5H1275.5V143" fill="none" stroke="#222" stroke-width="2.2"/><polyline points="1017.5,163.3 1036.5,263.5 1055.6,311.4 1075.1,236.4 1093.7,228.5 1113.1,188.9 1132.2,215.7 1151.2,215.7 1170.6,228.5 1190,318.2 1209,143 1227.7,317" fill="none" stroke="#1414e6" stroke-width="1.6" stroke-linejoin="miter"/><line x1="1017.5" y1="215.8" x2="1272.6" y2="215.8" stroke="#7a3a8a" stroke-width="2"/><line x1="1017.5" y1="316.8" x2="1266.5" y2="316.8" stroke="#c81818" stroke-width="2"/><path d="M1170.6 215.7L1190 317" fill="none" stroke="#f08a20" stroke-width="1.6"/><line x1="978" y1="353.7" x2="993" y2="353.7" stroke="#7a48b0" stroke-width="1.6"/><line x1="1038" y1="353.7" x2="1053" y2="353.7" stroke="#d02020" stroke-width="1.6"/><line x1="1077.5" y1="353.7" x2="1092" y2="353.7" stroke="#20c020" stroke-width="1.6"/><line x1="1116.3" y1="353.7" x2="1131" y2="353.7" stroke="#f08a20" stroke-width="1.6"/><line x1="1176.3" y1="353.7" x2="1190.7" y2="353.7" stroke="#1414e6" stroke-width="1.6"/></svg>
<div class="t" style="right:323.40px;top:163px;font-size:13.1px;color:#222;font-weight:normal;">30</div>
<div class="t" style="right:323.40px;top:189px;font-size:13.1px;color:#222;font-weight:normal;">25</div>
<div class="t" style="right:323.40px;top:214px;font-size:13.1px;color:#222;font-weight:normal;">20</div>
<div class="t" style="right:323.40px;top:239px;font-size:13.1px;color:#222;font-weight:normal;">15</div>
<div class="t" style="right:323.40px;top:265px;font-size:13.1px;color:#222;font-weight:normal;">10</div>
<div class="t" style="right:323.00px;top:290px;font-size:13.1px;color:#222;font-weight:normal;">5</div>
<div class="t" style="right:323.00px;top:315px;font-size:13.1px;color:#222;font-weight:normal;">0</div>
<div class="t" style="right:51.20px;top:189px;font-size:13.1px;color:#222;font-weight:normal;">100</div>
<div class="t" style="right:51.20px;top:214px;font-size:13.1px;color:#222;font-weight:normal;">80</div>
<div class="t" style="right:51.20px;top:239px;font-size:13.1px;color:#222;font-weight:normal;">60</div>
<div class="t" style="right:51.20px;top:265px;font-size:13.1px;color:#222;font-weight:normal;">40</div>
<div class="t" style="right:51.20px;top:290px;font-size:13.1px;color:#222;font-weight:normal;">20</div>
<div class="t" style="right:51.20px;top:315px;font-size:13.1px;color:#222;font-weight:normal;">0</div>
<div class="t " style="left:989px;top:328px;font-size:13.4px;color:#222;font-weight:normal;letter-spacing:-0.017px;">5 May</div>
<div class="t " style="left:1253.5px;top:328px;font-size:13.4px;color:#222;font-weight:normal;letter-spacing:0.197px;">18 May</div>
<div class="t " style="left:996px;top:347px;font-size:11.6px;color:#222;font-weight:normal;">Casing</div>
<div class="t " style="left:1056px;top:347px;font-size:11.6px;color:#222;font-weight:normal;">Gas</div>
<div class="t " style="left:1095px;top:347px;font-size:11.6px;color:#222;font-weight:normal;">Oil</div>
<div class="t " style="left:1134.8px;top:347px;font-size:11.6px;color:#222;font-weight:normal;">Tubing</div>
<div class="t " style="left:1194.7px;top:347px;font-size:11.6px;color:#222;font-weight:normal;">Water</div>
<div class="b" style="left:965px;top:365px;width:350px;height:27px;background:#50647a;border:1px solid #46596e;"></div>
<div class="t " style="left:969px;top:373px;font-size:13.6px;color:#fff;font-weight:normal;letter-spacing:0.073px;">Location Totals</div>
<div class="t " style="left:985.3px;top:410px;font-size:13.1px;color:#222;font-weight:normal;letter-spacing:-0.833px;">BBL</div>
<div class="t " style="left:1081.5px;top:407px;font-size:13.3px;color:#222;font-weight:normal;letter-spacing:-0.007px;">Border Line FED 02</div>
<div class="t " style="left:1271.3px;top:410px;font-size:13.1px;color:#222;font-weight:normal;letter-spacing:0.318px;">MCF</div>
<svg style="left:0;top:0" width="1323" height="846"><line x1="1013" y1="462.3" x2="1272" y2="462.3" stroke="#c6c6c6" stroke-width="1.5"/><line x1="1013" y1="493" x2="1272" y2="493" stroke="#c6c6c6" stroke-width="1.5"/><line x1="1013" y1="524" x2="1272" y2="524" stroke="#c6c6c6" stroke-width="1.5"/><line x1="1013" y1="554.6" x2="1272" y2="554.6" stroke="#c6c6c6" stroke-width="1.5"/><path d="M1012 435V585H1272.5V435" fill="none" stroke="#222" stroke-width="2.2"/><line x1="1014" y1="584.5" x2="1270" y2="584.5" stroke="#b03030" stroke-width="1.2"/><rect x="1030" y="433" width="7" height="7" fill="#006400"/><rect x="1012.7" y="579.4" width="7.2" height="7.2" fill="#006400"/><rect x="1021.3" y="581.6" width="7.2" height="7.2" fill="#006400"/><rect x="1038.8" y="581.6" width="7.2" height="7.2" fill="#006400"/><rect x="1047.5" y="581.6" width="7.2" height="7.2" fill="#006400"/><rect x="1056.1" y="581.6" width="7.2" height="7.2" fill="#006400"/><rect x="1064.8" y="581.6" width="7.2" height="7.2" fill="#006400"/><rect x="1073.4" y="581.6" width="7.2" height="7.2" fill="#006400"/><rect x="1082.1" y="581.6" width="7.2" height="7.2" fill="#006400"/><rect x="1090.7" y="581.6" width="7.2" height="7.2" fill="#006400"/><rect x="1099.4" y="581.6" width="7.2" height="7.2" fill="#006400"/><rect x="1108.0" y="581.6" width="7.2" height="7.2" fill="#006400"/><rect x="1116.7" y="581.6" width="7.2" height="7.2" fill="#006400"/><rect x="1125.3" y="581.6" width="7.2" height="7.2" fill="#006400"/><rect x="1134.0" y="581.6" width="7.2" height="7.2" fill="#006400"/><rect x="1142.6" y="581.6" width="7.2" height="7.2" fill="#006400"/><rect x="1151.3" y="581.6" width="7.2" height="7.2" fill="#006400"/><rect x="1159.9" y="581.6" width="7.2" height="7.2" fill="#006400"/><rect x="1168.6" y="581.6" width="7.2" height="7.2" fill="#006400"/><rect x="1177.2" y="581.6" width="7.2" height="7.2" fill="#006400"/><rect x="1185.9" y="581.6" width="7.2" height="7.2" fill="#006400"/><rect x="1194.5" y="581.6" width="7.2" height="7.2" fill="#006400"/><rect x="1203.2" y="581.6" width="7.2" height="7.2" fill="#006400"/><rect x="1211.8" y="581.6" width="7.2" height="7.2" fill="#006400"/><rect x="1220.5" y="581.6" width="7.2" height="7.2" fill="#006400"/><rect x="1229.1" y="581.6" width="7.2" height="7.2" fill="#006400"/><rect x="1237.8" y="581.6" width="7.2" height="7.2" fill="#006400"/><rect x="1246.4" y="581.6" width="7.2" height="7.2" fill="#006400"/><rect x="1255.1" y="581.6" width="7.2" height="7.2" fill="#006400"/><rect x="1263.7" y="581.6" width="7.2" height="7.2" fill="#006400"/><rect x="982.4" y="617.5" width="7.4" height="7.4" fill="#006400"/><path d="M1056.3 622.5H1065M1067 622.5H1070" stroke="#b81818" stroke-width="1"/><path d="M1137 622.5H1153" stroke="#0000b8" stroke-width="1" stroke-dasharray="2.2 1.8"/><path d="M1200 584.5L1206.5 579.4L1212 584.5" fill="none" stroke="#2020b0" stroke-width="1.1" stroke-dasharray="2 1.5"/></svg>
<div class="t" style="right:319.70px;top:460px;font-size:13.1px;color:#222;font-weight:normal;">800</div>
<div class="t" style="right:319.70px;top:491px;font-size:13.1px;color:#222;font-weight:normal;">600</div>
<div class="t" style="right:319.70px;top:522px;font-size:13.1px;color:#222;font-weight:normal;">400</div>
<div class="t" style="right:319.70px;top:553px;font-size:13.1px;color:#222;font-weight:normal;">200</div>
<div class="t" style="right:319.50px;top:583px;font-size:13.1px;color:#222;font-weight:normal;">0</div>
<div class="t " style="left:991.6px;top:596px;font-size:13.4px;color:#222;font-weight:normal;letter-spacing:0.241px;">19 Apr</div>
<div class="t " style="left:1249.6px;top:596px;font-size:13.4px;color:#222;font-weight:normal;letter-spacing:0.137px;">18 May</div>
<div class="t " style="left:999.5px;top:615px;font-size:11.7px;color:#222;font-weight:normal;letter-spacing:0.097px;">Oil Prod</div>
<div class="t " style="left:1073.7px;top:615px;font-size:11.7px;color:#222;font-weight:normal;letter-spacing:-0.659px;">Gas Sales</div>
<div class="t " style="left:1154.6px;top:615px;font-size:11.7px;color:#222;font-weight:normal;letter-spacing:0.081px;">Water Prod</div>
<div class="t " style="left:974.7px;top:669px;font-size:13.7px;color:#333;font-weight:normal;letter-spacing:0.145px;">Oil Prod:</div>
<div class="t" style="right:200.00px;top:669px;font-size:13.7px;color:#333;font-weight:normal;">0.0</div>
<div class="t " style="left:1137.8px;top:669px;font-size:13.7px;color:#333;font-weight:normal;letter-spacing:0.069px;">Water Prod:</div>
<div class="t" style="right:37.00px;top:669px;font-size:13.7px;color:#333;font-weight:normal;">0.0</div>
<div class="t " style="left:974.7px;top:688px;font-size:13.7px;color:#333;font-weight:normal;letter-spacing:-0.527px;">Gas Sales:</div>
<div class="t" style="right:200.00px;top:688px;font-size:13.7px;color:#333;font-weight:normal;">0.0</div>
<svg style="left:990px;top:724px" width="19" height="21" viewBox="0 0 19 21"><rect x="0.5" y="0.5" width="18" height="20" rx="2" fill="#1b6aa7"/><rect x="3" y="3" width="13" height="4" fill="#fff"/><g fill="#fff"><rect x="3" y="9.5" width="3" height="3"/><rect x="8" y="9.5" width="3" height="3"/><rect x="13" y="9.5" width="3" height="3"/><rect x="3" y="14.5" width="3" height="3"/><rect x="8" y="14.5" width="3" height="3"/><rect x="13" y="14.5" width="3" height="3"/></g></svg>
<div class="b" style="left:1182px;top:721px;width:125px;height:28px;border:1px solid #70a6d4;border-radius:11px;"></div>
<div class="t " style="left:1200px;top:731px;font-size:12.8px;color:#1b6aa7;font-weight:bold;letter-spacing:0.062px;">Carry Forward</div>
<div class="b" style="left:969px;top:756px;width:21px;height:21px;background:#eeeeee;border-radius:50%;"></div>
<div class="t " style="left:999.5px;top:761px;font-size:14.0px;color:#222;font-weight:normal;letter-spacing:0.215px;">Nothing to Publish</div>
<svg style="left:971px;top:782px" width="16" height="19"><path d="M8 18.5C6 15.5 0.5 11 0.5 7.3A7.5 7.3 0 0 1 15.5 7.3C15.5 11 10 15.5 8 18.5Z" fill="#1b6aa7"/></svg>
<div class="t " style="left:999.5px;top:785px;font-size:14.0px;color:#222;font-weight:normal;letter-spacing:0.094px;">Not Visited Today</div>
<svg style="left:970.6px;top:806px" width="16.8" height="18.6" viewBox="0 0 18 19" preserveAspectRatio="none"><rect x="0.5" y="3" width="17" height="15.5" rx="1.5" fill="#1b6aa7"/><rect x="3" y="0.5" width="2.5" height="4" fill="#1b6aa7"/><rect x="12.5" y="0.5" width="2.5" height="4" fill="#1b6aa7"/><rect x="0.5" y="5.5" width="17" height="1" fill="#fff"/><path d="M9 8.5V16M5.3 12.2H12.7" stroke="#fff" stroke-width="2.2"/></svg>
<div class="t " style="left:999.5px;top:809px;font-size:14.0px;color:#222;font-weight:normal;letter-spacing:-0.019px;">Not Planned Today</div>
<div class="b" style="left:236px;top:132.8px;width:40px;height:40px;background:#7966d6;border-radius:50%;box-shadow:-1px 4px 6px rgba(0,0,0,0.35);"></div>
<div class="t" style="left:56.00px;width:400px;text-align:center;top:139px;font-size:29px;color:#fff;font-weight:normal;-webkit-text-stroke:0.5px #fff;">1</div>
<div class="b" style="left:907px;top:29px;width:40px;height:40px;background:#7966d6;border-radius:50%;box-shadow:-1px 4px 6px rgba(0,0,0,0.35);"></div>
<div class="t" style="left:727.00px;width:400px;text-align:center;top:36px;font-size:29px;color:#fff;font-weight:normal;-webkit-text-stroke:0.5px #fff;">2</div>
<div class="b" style="left:135px;top:462px;width:40px;height:40px;background:#7966d6;border-radius:50%;box-shadow:-1px 4px 6px rgba(0,0,0,0.35);"></div>
<div class="t" style="left:-45.00px;width:400px;text-align:center;top:468px;font-size:29px;color:#fff;font-weight:normal;-webkit-text-stroke:0.5px #fff;">3</div>
<div class="b" style="left:603px;top:337px;width:268px;height:88px;background:#fff;border:3px solid #5b17bf;"></div>
<div class="t " style="left:654.5px;top:371px;font-size:23px;color:#111;font-weight:normal;letter-spacing:0.783px;-webkit-text-stroke:0.75px #111;">Location Detail</div>
</body></html>
